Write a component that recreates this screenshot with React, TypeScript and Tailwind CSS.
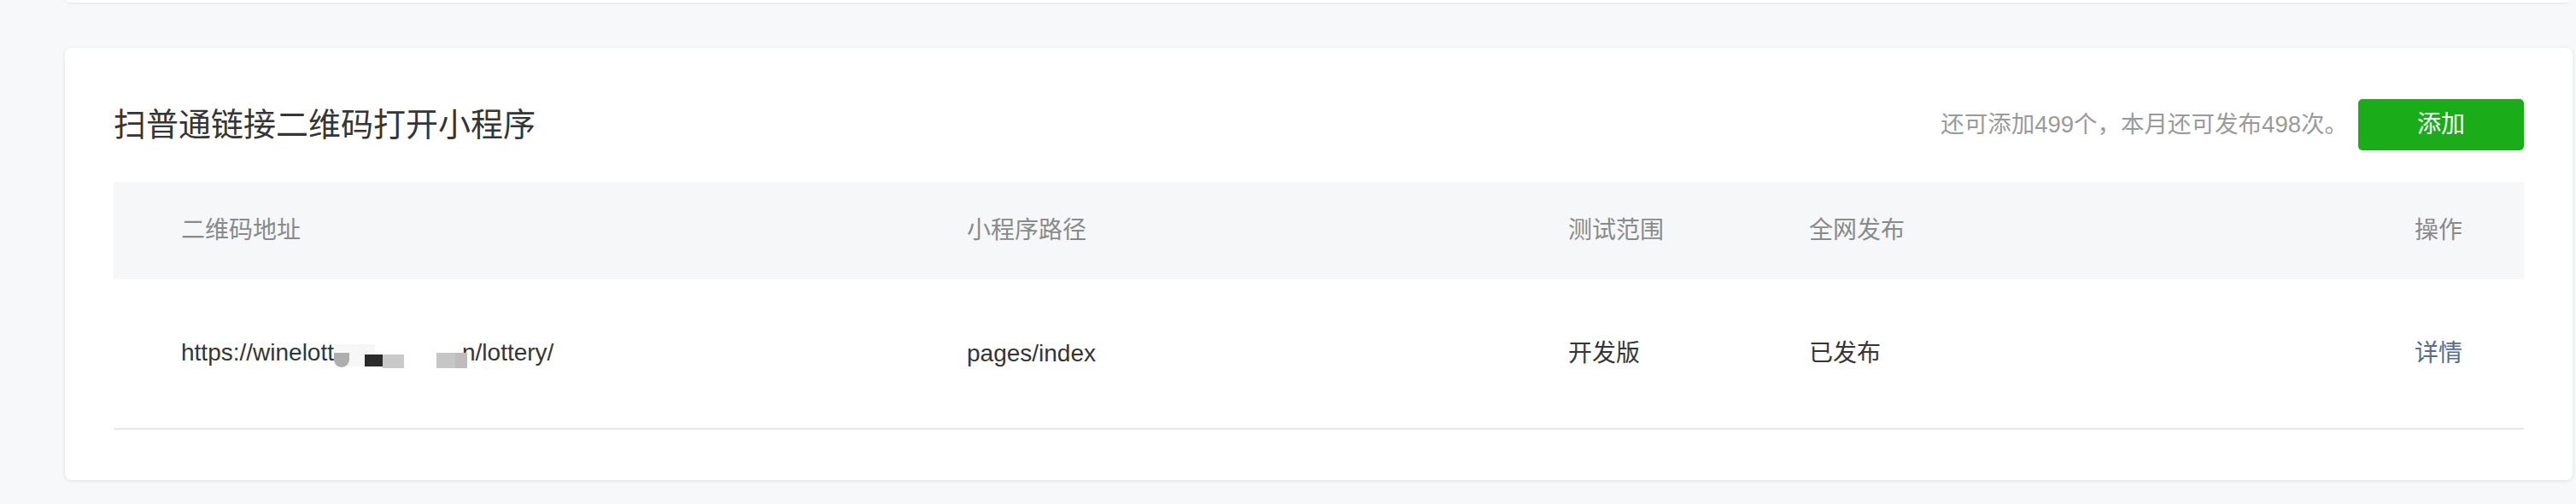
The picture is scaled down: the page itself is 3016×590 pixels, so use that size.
import React from "react";

const font = { fontFamily: '"Liberation Sans", "Noto Sans CJK SC", sans-serif' };

const Redacted = () => (
  <span className="relative inline-block h-[28px] w-[150px] align-middle">
    <span className="absolute left-0 top-[2px] h-[26px] w-[48px] bg-[#f7f7f7]" />
    <span className="absolute left-0 top-[12px] h-[17px] w-[18px] rounded-b-full bg-[#aeaeae]" />
    <span className="absolute left-[36px] top-[14px] h-[14px] w-[21px] bg-[#2b2b2b]" />
    <span className="absolute left-[57px] top-[14px] h-[16px] w-[25px] bg-[#c9c9c9]" />
    <span className="absolute left-[120px] top-[12px] h-[18px] w-[22px] bg-[#c6c6c6]" />
    <span className="absolute left-[142px] top-[12px] h-[18px] w-[14px] bg-[#bdbdbd]" />
  </span>
);

export default function App() {
  return (
    <main className="min-h-[590px] w-full bg-[#f7f8fa]" style={font}>
      <div className="ml-[78px] mr-[8px] h-[3px] rounded-b-[6px] bg-white shadow-[0_1px_3px_rgba(0,0,0,0.08)]" />

      <section className="ml-[76px] mr-[4px] mt-[53px] rounded-[8px] bg-white px-[57px] pb-[59px] pt-[60px] shadow-[0_1px_4px_rgba(0,0,0,0.1)]">
        <div className="flex h-[60px] items-center justify-between">
          <h2 className="text-[38px] font-normal leading-none text-[#353535]">扫普通链接二维码打开小程序</h2>
          <div className="flex items-center gap-[12px]">
            <span className="text-[27.5px] leading-none text-[#9a9a9a]">还可添加499个，本月还可发布498次。</span>
            <button
              type="button"
              className="flex h-[60px] w-[194px] items-center justify-center rounded-[5px] bg-[#1aad19] text-[28px] leading-none text-white"
            >
              添加
            </button>
          </div>
        </div>

        <div className="mt-[37px]">
          <div className="grid h-[114px] grid-cols-[920px_704px_282px_1fr_auto] items-center bg-[#f5f7f8] pl-[79px] pr-[72px] text-[28px] leading-none text-[#8a8a8a]">
            <span>二维码地址</span>
            <span>小程序路径</span>
            <span>测试范围</span>
            <span>全网发布</span>
            <span>操作</span>
          </div>
          <div className="grid h-[176px] grid-cols-[920px_704px_282px_1fr_auto] items-center border-b-2 border-[#e5e6ea] pl-[79px] pr-[72px] text-[28px] leading-none text-[#353535]">
            <span className="whitespace-nowrap">
              https://winelott
              <Redacted />
              n/lottery/
            </span>
            <span>pages/index</span>
            <span>开发版</span>
            <span>已发布</span>
            <a href="#" className="text-[#576b95]">详情</a>
          </div>
        </div>
      </section>
    </main>
  );
}
